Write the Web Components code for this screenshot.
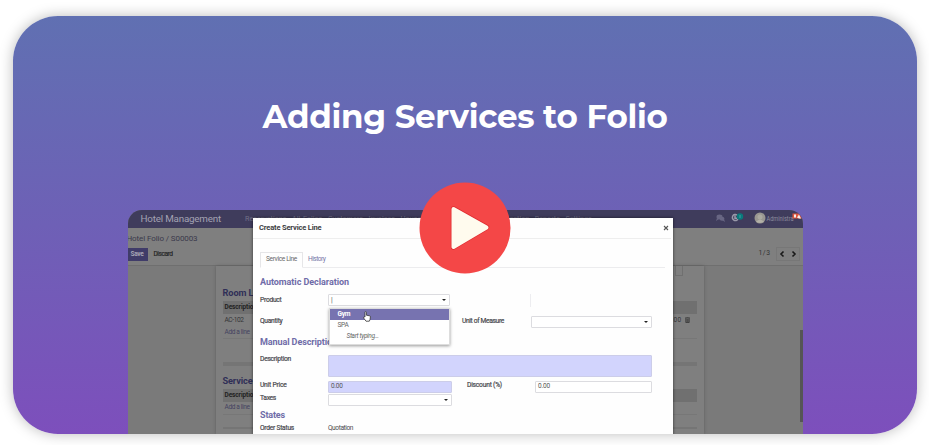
<!DOCTYPE html>
<html lang="en"><head><meta charset="utf-8"><title>Adding Services to Folio</title>
<style>
html,body{margin:0;background:#fff;width:929px;height:445px;overflow:hidden;font-family:Roboto,"Liberation Sans",Arial,sans-serif}
</style></head><body>
<video-card></video-card>
<script>
const define=(name,html,init)=>customElements.define(name,class extends HTMLElement{
  connectedCallback(){
    if(this.shadowRoot)return;
    this.attachShadow({mode:'open'}).innerHTML=html;
    if(init)init.call(this,this.shadowRoot);
  }
});

/* A line of text set to a given width: w = width, s = font size */
define('fit-text',`<style>:host{display:block;white-space:pre;line-height:1;flex:none}span{display:inline-block}</style><span><slot></slot></span>`,function(r){
  const s=r.querySelector('span');
  this.style.fontSize=this.getAttribute('s')+'px';
  const w=+this.getAttribute('w');
  if(!w)return;
  const n=this.textContent.length, nat=s.getBoundingClientRect().width;
  s.style.letterSpacing=((w-nat)/n)+'px';
  this.style.width=w+'px';
});

define('field-box',`<style>:host{display:flex;align-items:center;justify-content:space-between;box-sizing:border-box;border:1px solid #dcdce0;border-radius:1px;background:#fff;color:#555;padding:0 2px}
:host([tint]){background:#d2d4fd;border-color:#cccde9}
i{display:none;border:2px solid transparent;border-top:2.5px solid #222;border-bottom:0;margin-right:1px}
:host([arrow]) i{display:block}</style><slot><span></span></slot><i></i>`);

define('form-row',`<style>:host{display:grid;grid-template-columns:68px 122px 13px 68px 1fr;align-items:center;box-sizing:border-box;padding-left:7px;padding-right:21.5px;color:#4a4a50}
</style><slot></slot>`);

define('section-title',`<style>:host{display:flex;align-items:center;padding-left:7px;color:#6f6ca8;font-weight:bold}</style><slot></slot>`);

define('tab-bar',`<style>:host{display:flex;margin:0 8px 0 7px;height:15px;border-bottom:1px solid #ececee;box-sizing:border-box;align-items:center}
div{box-sizing:border-box;width:43px;height:16px;border:1px solid #e6e6e8;border-bottom-color:#fff;display:flex;align-items:center;padding-left:5px;color:#666}
fit-text.h{margin-left:5px;color:#7876a9}</style>
<div><fit-text s="6.6" w="31">Service Line</fit-text></div><fit-text class="h" s="6.6" w="17.5">History</fit-text>`);

define('drop-down',`<style>:host{display:block;box-sizing:border-box;width:121px;height:37px;background:#fff;border:1px solid #ddd;box-shadow:0 1px 3px #0006;color:#666}
div{height:11px;display:flex;align-items:center;padding-left:8px}
.on{background:#7773b0;color:#fff;font-weight:bold}.it{padding-left:17px;font-style:italic;height:11px}</style>
<div class="on"><fit-text s="6.6" w="12.5">Gym</fit-text></div><div><fit-text s="6.6" w="11">SPA</fit-text></div><div class="it"><fit-text s="6.5" w="32">Start typing...</fit-text></div>`);

define('service-dialog',`<style>
:host{display:flex;flex-direction:column;background:#fefefe;box-shadow:0 0 3px #0009;position:relative}
header{height:20px;flex:none;border-bottom:1px solid #eee;margin:0 2px 14px 0;padding:0 2px 0 6px;display:flex;align-items:center;justify-content:space-between;color:#3d3d42;font-weight:bold}
svg{display:block}
.dv{border-left:1px solid #ededf0}
.k{-webkit-text-stroke:.2px}
drop-down{position:absolute;left:75.5px;top:90px}
.hand{position:absolute;left:110px;top:93.5px}
</style>
<header><fit-text s="7.5" w="62.5">Create Service Line</fit-text><svg width="6" height="6" viewBox="0 0 6 6"><path d="M1 1l4 4M5 1L1 5" stroke="#555" stroke-width="1.1"/></svg></header>
<tab-bar></tab-bar>
<section-title style="height:22px;margin-top:4px"><fit-text s="9" w="89">Automatic Declaration</fit-text></section-title>
<form-row style="height:12px"><fit-text class="k" s="6.7" w="21.5">Product</fit-text><field-box arrow style="height:12px"><fit-text s="7">|</fit-text></field-box><span></span><span></span><span class="dv" style="height:13px;margin-left:-1px"></span></form-row>
<form-row style="height:25px;padding-top:7px"><fit-text class="k" s="6.7" w="22.5">Quantity</fit-text><span></span><span></span><fit-text class="k" s="6.7" w="42" style="margin-left:-1px">Unit of Measure</fit-text><field-box arrow style="height:12px"></field-box></form-row>
<section-title style="height:24px"><fit-text s="9" w="77">Manual Description</fit-text></section-title>
<form-row style="height:22px;grid-template-columns:68px 1fr"><fit-text class="k" s="6.7" w="31" style="margin-bottom:13px">Description</fit-text><field-box tint style="height:22px"></field-box></form-row>
<form-row style="height:12px;margin-top:4px;grid-template-columns:68px 124px 15px 68px 1fr"><fit-text class="k" s="6.7" w="26.5" style="margin-bottom:2px">Unit Price</fit-text><field-box tint style="height:12px"><fit-text s="6.5" w="11.5">0.00</fit-text></field-box><span></span><fit-text class="k" s="6.7" w="35" style="margin-bottom:2px">Discount (%)</fit-text><field-box style="height:12px"><fit-text s="6.5" w="12">0.00</fit-text></field-box></form-row>
<form-row style="height:12px;margin-top:1px;grid-template-columns:68px 124px"><fit-text class="k" s="6.7" w="16" style="margin-bottom:2px">Taxes</fit-text><field-box arrow style="height:12px"></field-box></form-row>
<section-title style="height:19px"><fit-text s="9" w="25">States</fit-text></section-title>
<form-row style="height:8px"><fit-text class="k" s="6.6" w="34">Order Status</fit-text><fit-text s="6.6" w="25">Quotation</fit-text></form-row>
<drop-down></drop-down>
<svg class="hand" width="8" height="11" viewBox="0 0 8 11"><path d="M2 6V1.4Q2 .6 2.7.6T3.4 1.4V4.2L6.6 4.8Q7.5 5 7.4 6L7 8.6 6.3 10.2H3L.8 7.2Q.2 6 1.1 5.8z" fill="#fff" stroke="#333" stroke-width=".8"/></svg>`);

define('nav-bar',`<style>:host{display:flex;height:18px;background:#3f3c5c;align-items:center;color:#a3a2b2;padding-left:13px;flex:none}
.nav{margin-left:24px;color:#737189;flex:1}
svg{display:block;flex:none}</style>
<fit-text s="9.8" w="80.500">Hotel Management</fit-text>
<fit-text class="nav" s="7.2" style="word-spacing:1px">Reservations  All Folios  Customers  Invoices  Housekeeping  Products  Configuration  Reports  Settings</fit-text>
<svg width="88" height="18" viewBox="587 0 88 18"><g fill="#686683"><ellipse cx="591.5" cy="7" rx="3" ry="2.4"/><ellipse cx="594" cy="8.8" rx="2.4" ry="2"/><path d="M589 8l-1 3 3-2zM594 10l3 2-1-3z"/></g>
<path d="M609 5a3 3 0 1 0 1 4M607 5.500v2.700h2" fill="none" stroke="#9a99aa" stroke-width="1.500"/><circle cx="612" cy="6.500" r="3.200" fill="#087b7c"/><path d="M612 5v3" stroke="#4b9c9f"/>
<circle cx="632" cy="8" r="5.500" fill="#999791"/><circle cx="632" cy="7" r="2.500" fill="#aaa9a0"/><path d="M628 12q4-5 8 0l-4 1z" fill="#b3b1a8"/>
<text x="638.500" y="10.500" font-size="7" fill="#8e8c9e" textLength="27" lengthAdjust="spacingAndGlyphs">Administra</text>
<path d="M664.500 3.500h7l2.500 5h-9.500z" fill="#df553d"/><path d="M666 4.500h2v3h-2zM669 7.500l2-3 2 4h-2z" fill="#f5ede9"/></svg>`);

define('folio-list',`<style>:host{display:block;color:#353538}
h3{margin:0;height:16px;display:flex;align-items:center;color:#302f57}
.th{height:13px;background:#707070;display:flex;align-items:center;padding-left:2px;font-weight:bold;color:#222}
.r{display:flex;align-items:center;padding-left:2px;height:12px}.a{color:#45435f;border-bottom:1px solid #777}</style>
<h3><slot name="title"></slot></h3>
<div class="th"><fit-text s="6.5" w="32.5">Description</fit-text></div>
<slot></slot>
<div class="r a"><fit-text s="6.6" w="25">Add a line</fit-text></div>`);

define('hotel-app',`<style>
:host{display:flex;flex-direction:column;background:#7a7a7a;border-radius:14px 14px 0 0;overflow:hidden;position:relative}
.cp{height:37px;flex:none;background:#7f7f7f;border-bottom:1px solid #6f6f6f;display:flex;justify-content:space-between;color:#3b3a4c}
.l{padding-top:6.5px}.b{display:flex;margin-top:5.5px;height:13px}
.save{width:20px;background:#403c69;color:#a7a6b5;display:flex;align-items:center;padding-left:3px;box-sizing:border-box}
.dis{width:24px;display:flex;align-items:center;padding-left:6px;color:#292929}
.pg{display:flex;align-items:center;align-self:flex-end;height:13px;margin:0 3px 5px 0;color:#333}
.bt{display:flex;width:22px;height:12px;border:1px solid #777;margin-left:6px}
.main{display:flex;flex:1;justify-content:space-between;min-height:0}
.sheet{width:488px;margin-left:88px;background:#7f7f7f;box-shadow:0 0 3px #4448;position:relative;padding:0 7px;box-sizing:border-box}
.row{display:flex;height:12px;align-items:center;padding-left:2px;justify-content:space-between}
.row span{display:flex;gap:3px;align-items:center;padding-right:7px}
.track{width:3px;padding-top:64px}.thumb{height:92px;background:#555}
.stub{height:10px;width:8px;border:1px solid #707070;border-top:0;box-sizing:border-box;margin-left:452px}
.sp{height:4px;background:#757575}
service-dialog{position:absolute;left:125.500px;top:7.500px;width:420px;height:217px}
</style>
<nav-bar></nav-bar>
<div class="cp"><div class="l"><fit-text s="8" w="71" style="margin-left:-1px">Hotel Folio / S00003</fit-text><div class="b"><div class="save"><fit-text s="6.5" w="13" style="font-weight:bold">Save</fit-text></div><div class="dis"><fit-text s="6.6" w="19" style="-webkit-text-stroke:.2px">Discard</fit-text></div></div></div>
<div class="pg"><fit-text s="6.800" w="11">1 / 3</fit-text><div class="bt"><svg width="22" height="12" viewBox="0 0 22 12"><path d="M6.500 3.500L4 6l2.500 2.500M15.500 3.500L18 6 15.500 8.500" fill="none" stroke="#181818" stroke-width="1.600"/></svg></div></div></div>
<div class="main"><div class="sheet"><div class="stub"></div>
<folio-list style="padding-top:9px"><fit-text slot="title" s="9.200" w="31" style="font-weight:bold">Room L</fit-text>
<div class="row"><fit-text s="6.6" w="19">AC-102</fit-text><span><fit-text s="6.500" w="10">.00</fit-text><svg width="5" height="6" viewBox="0 0 5 6"><path d="M0 1h5M1.500 0h2M.8 1.500v4h3.400v-4M2 2v3M3 2v3" fill="none" stroke="#333" stroke-width=".8"/></svg></span></div></folio-list>
<div class="sp" style="margin-top:23px"></div>
<folio-list style="margin-top:6.5px"><fit-text slot="title" s="9.200" w="30" style="font-weight:bold">Service</fit-text></folio-list>
<div class="sp" style="margin-top:12px;height:2px"></div>
</div><div class="track"><div class="thumb"></div></div></div>
<service-dialog></service-dialog>`);

define('play-button',`<style>:host{display:block;width:92px;height:92px}</style><svg width="92" height="92" viewBox="0 0 92 92"><circle cx="46" cy="46" r="45.500" fill="#f44747"/><path d="M35 27.500L68 46 35 65.500z" transform="translate(-.5 -.500)" fill="#fffbee" stroke="#e02c31" stroke-width="5.500" stroke-linejoin="round"/><path d="M35 27.500L68 46 35 65.500z" transform="translate(-.5 -.500)" fill="#fffbee" stroke="#fffbee" stroke-width="4" stroke-linejoin="round"/></svg>`);

define('video-card',`<style>
:host{display:flex;flex-direction:column;align-items:center;box-sizing:border-box;width:904px;height:418px;margin:16px 0 0 13px;border-radius:45px;background:linear-gradient(#6070b2,#6e60b6 50%,#7d4fbc);box-shadow:0 0 14px #0004;position:relative}
h1{margin:0;height:194px;box-sizing:border-box;padding-top:85px;color:#fff;font-family:Montserrat,Inter,sans-serif;font-weight:700}
hotel-app{width:675px;height:224px}
play-button{position:absolute;left:405.500px;top:166px}
</style><h1><fit-text s="32.500" w="405">Adding Services to Folio</fit-text></h1><hotel-app></hotel-app><play-button></play-button>`);
</script></body></html>
